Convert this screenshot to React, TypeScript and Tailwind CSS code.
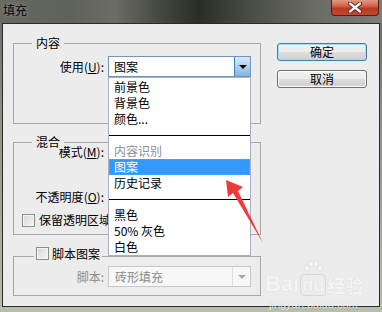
import React from 'react';

const listItems: { label: string; kind?: 'sep' | 'muted' | 'active' }[] = [
  { label: '前景色' },
  { label: '背景色' },
  { label: '颜色...' },
  { label: '', kind: 'sep' },
  { label: '内容识别', kind: 'muted' },
  { label: '图案', kind: 'active' },
  { label: '历史记录' },
  { label: '', kind: 'sep' },
  { label: '黑色' },
  { label: '50% 灰色' },
  { label: '白色' },
];

function Checkbox() {
  return (
    <span className="inline-block h-[13px] w-[13px] shrink-0 border border-[#8e8f8f] bg-gradient-to-br from-[#d6d6d6] to-[#f7f7f7] shadow-[inset_0_0_0_1px_#f4f4f4]" />
  );
}

function Hotkey({ text, letter }: { text: string; letter: string }) {
  return (
    <span>
      {text}(<span className="underline underline-offset-1">{letter}</span>):
    </span>
  );
}

export default function App() {
  return (
    <div className="flex h-[312px] w-[382px] flex-col overflow-hidden bg-[linear-gradient(180deg,#676a62_0%,#8d9385_40%,#b8bead_100%)] font-['Noto_Sans_CJK_SC',sans-serif] text-[12px] leading-[14px] text-black">
      {/* title bar */}
      <div className="flex h-[23px] shrink-0 items-start justify-between bg-[linear-gradient(90deg,#676a62_0%,#5f625a_18%,#6b6d64_30%,#45483f_42%,#2b2e27_52%,#4b4e46_66%,#6a6c64_82%,#7b7d76_100%)]">
        <span className="pl-[3px] pt-[3px] text-[12px] font-medium text-[#151515] [text-shadow:0_0_4px_rgba(255,255,255,0.35)]">填充</span>
        <div className="mr-[3px] flex h-[16px] w-[48px] items-center justify-center rounded-b-[4px] border border-t-0 border-[#4e2118] bg-[linear-gradient(180deg,#e39a86_0%,#cf5a40_45%,#b63a22_55%,#c44a2e_100%)]">
          <svg width="14" height="11" viewBox="0 0 14 11">
            <path d="M2 1.5 L12 9.5 M12 1.5 L2 9.5" stroke="#3a1a14" strokeWidth="4" strokeLinecap="round" />
            <path d="M2 1.5 L12 9.5 M12 1.5 L2 9.5" stroke="#f4f4f4" strokeWidth="2.4" strokeLinecap="round" />
          </svg>
        </div>
      </div>

      {/* client area */}
      <div className="relative mx-[2px] mb-[5px] flex flex-1 border border-[#2a2a2a] bg-[#ececec]">
        <div className="flex flex-col pl-[10px] pt-[19px]">
          {/* 内容 */}
          <div className="relative h-[81px] w-[248px] border border-[#a7a7a7] pt-[12px]">
            <span className="absolute left-[18px] top-[-8px] bg-[#ececec] px-[4px]">内容</span>
            <div className="flex items-center">
              <div className="w-[90px] text-right">
                <Hotkey text="使用" letter="U" />
              </div>
              <div className="relative ml-[4px] flex h-[21px] w-[143px] items-center border border-[#6f95bd] bg-white">
                <span className="pl-[5px]">图案</span>
                <div className="ml-auto flex h-[19px] w-[16px] items-center justify-center border-l border-[#3c7fb1] bg-gradient-to-b from-[#d7eaf9] to-[#83b6e0]">
                  <span className="h-0 w-0 border-x-[4px] border-t-[4px] border-x-transparent border-t-black" />
                </div>
                {/* open list */}
                <div className="absolute left-[-1px] top-[20px] z-10 w-[143px] border border-[#a9afc2] bg-white pt-[1px]">
                  {listItems.map((item, i) =>
                    item.kind === 'sep' ? (
                      <div key={i} className="flex h-[16px] items-center">
                        <div className="h-[1px] w-full bg-black" />
                      </div>
                    ) : (
                      <div
                        key={i}
                        className={
                          item.kind === 'active'
                            ? 'h-[16px] border border-dotted border-[#e08a2e] bg-[#3399ff] pl-[4px] leading-[14px] text-white'
                            : item.kind === 'muted'
                            ? 'h-[16px] pl-[5px] leading-[16px] text-[#8e8e8e]'
                            : 'h-[16px] pl-[5px] leading-[16px]'
                        }
                      >
                        {item.label}
                      </div>
                    )
                  )}
                </div>
              </div>
            </div>
          </div>

          {/* 混合 */}
          <div className="relative mt-[18px] h-[93px] w-[248px] border border-[#a7a7a7]">
            <span className="absolute left-[18px] top-[-8px] bg-[#ececec] px-[4px]">混合</span>
            <div className="mt-[2px] w-[90px] text-right">
              <Hotkey text="模式" letter="M" />
            </div>
            <div className="mt-[31px] w-[90px] text-right">
              <Hotkey text="不透明度" letter="O" />
            </div>
            <div className="ml-[8px] mt-[9px] flex items-center gap-[4px]">
              <Checkbox />
              <span className="whitespace-nowrap">保留透明区域</span>
            </div>
          </div>

          {/* 脚本图案 */}
          <div className="relative mt-[21px] h-[40px] w-[248px] border border-[#a7a7a7] pt-[9px]">
            <div className="absolute left-[20px] top-[-10px] flex h-[13px] items-center gap-[3px] bg-[#ececec] px-[2px]">
              <Checkbox />
              <span>脚本图案</span>
            </div>
            <div className="flex items-center">
              <div className="w-[90px] text-right text-[#8f8f8f]">脚本:</div>
              <div className="ml-[4px] flex h-[21px] w-[143px] items-center border border-[#c9c9c9] bg-[#f7f7f7]">
                <span className="pl-[6px] text-[#8a8a8a]">砖形填充</span>
                <div className="ml-auto flex h-[19px] w-[18px] items-center justify-center border-l border-[#dedede]">
                  <span className="h-0 w-0 border-x-[4px] border-t-[4px] border-x-transparent border-t-[#a6a6a6]" />
                </div>
              </div>
            </div>
          </div>
        </div>

        {/* buttons */}
        <div className="ml-[16px] flex flex-col pt-[19px]">
          <button className="flex h-[18px] w-[90px] items-center justify-center rounded-[3px] border border-[#3c7fb1] bg-[linear-gradient(180deg,#f2f2f2_0%,#ebebeb_50%,#dddddd_51%,#cfcfcf_100%)] shadow-[inset_0_0_0_1px_#9ee0f7]">
            确定
          </button>
          <button className="mt-[9px] flex h-[18px] w-[90px] items-center justify-center rounded-[3px] border border-[#707070] bg-[linear-gradient(180deg,#f2f2f2_0%,#ebebeb_50%,#dddddd_51%,#cfcfcf_100%)] shadow-[inset_0_0_0_1px_#fbfbfb]">
            取消
          </button>
        </div>

        {/* red pointer arrow */}
        <svg className="absolute left-[220px] top-[150px] z-20" width="50" height="100" viewBox="223 174 50 100">
          <polygon points="226,180 243,187 238,191 263,243 233,193 228,197" fill="#f0393a" />
        </svg>

        {/* watermark */}
        <div className="pointer-events-none absolute left-[262px] top-[236px] flex flex-col font-['Liberation_Sans',sans-serif] text-[#f6f6f6] opacity-80 [text-shadow:0_0_1px_rgba(0,0,0,0.15)]">
          <div className="flex items-end">
            <span className="text-[22px] font-bold leading-[24px]">Bai</span>
            <span className="relative ml-[1px] flex flex-col items-center">
              <svg width="22" height="14" viewBox="0 0 22 14">
                <g fill="#f6f6f6" stroke="rgba(0,0,0,0.12)" strokeWidth="0.6">
                  <ellipse cx="5" cy="8" rx="2.5" ry="3" />
                  <ellipse cx="9" cy="4" rx="2.5" ry="3" />
                  <ellipse cx="14" cy="4" rx="2.5" ry="3" />
                  <ellipse cx="18" cy="8" rx="2.5" ry="3" />
                </g>
              </svg>
              <span className="rounded-[4px] border border-[rgba(0,0,0,0.1)] px-[1px] text-[18px] font-bold leading-[20px]">du</span>
            </span>
            <span className="ml-[1px] font-['Noto_Sans_CJK_SC',sans-serif] text-[18px] font-bold leading-[22px]">经验</span>
          </div>
          <span className="mt-[2px] pl-[4px] text-[11px] leading-[12px]">jingyan.baidu.com</span>
        </div>
      </div>
    </div>
  );
}
